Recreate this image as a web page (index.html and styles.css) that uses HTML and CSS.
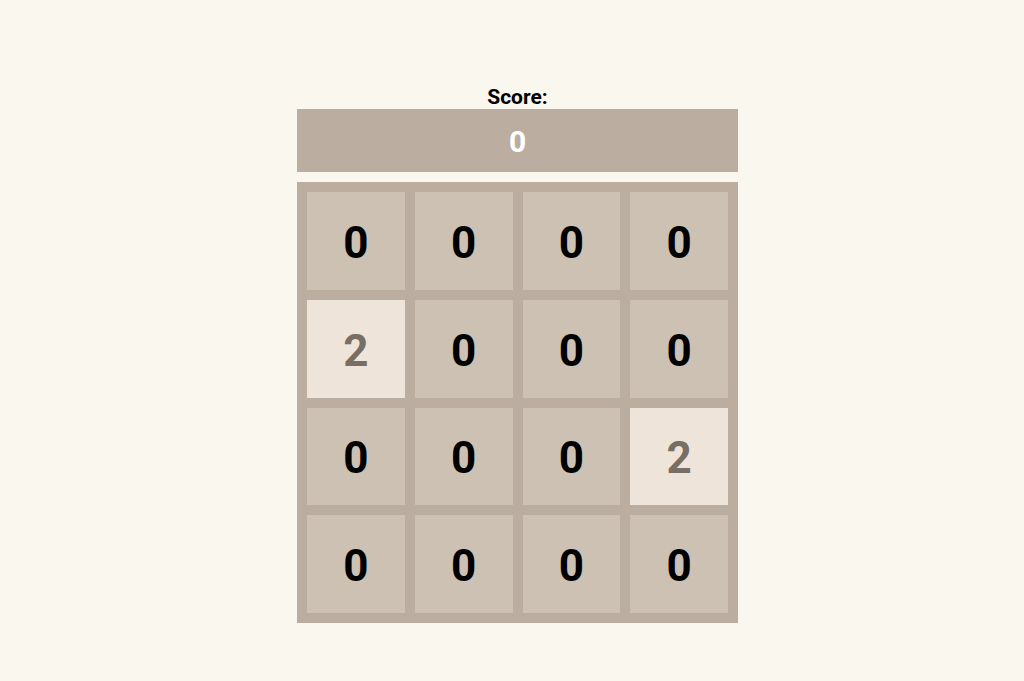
FILE: index.html
```html
<!DOCTYPE html>
<html>

<head>
    <title>2048</title>
    <link rel="stylesheet" href="styles.css">
</head>

<body>
    <div class="game">
        <div class="score-label">Score:</div>
        <div class="score" id="score">0</div>
        <div class="board" id="board">
            <div class="tile">0</div>
            <div class="tile">0</div>
            <div class="tile">0</div>
            <div class="tile">0</div>
            <div class="tile tile-2">2</div>
            <div class="tile">0</div>
            <div class="tile">0</div>
            <div class="tile">0</div>
            <div class="tile">0</div>
            <div class="tile">0</div>
            <div class="tile">0</div>
            <div class="tile tile-2">2</div>
            <div class="tile">0</div>
            <div class="tile">0</div>
            <div class="tile">0</div>
            <div class="tile">0</div>
        </div>
    </div>
</body>

</html>
```

FILE: styles.css
```css
body {
    font-family: Roboto, Arial, sans-serif;
    background: #faf7ef;
    margin: 0;
    padding: 0 0 0 11px;
}

.game {
    width: 441px;
    margin: 85px auto 0;
}

.score-label {
    text-align: center;
    font-size: 21px;
    font-weight: bold;
    line-height: 24px;
    color: #000;
}

.score {
    background: #bbada0;
    color: white;
    height: 63px;
    line-height: 65px;
    text-align: center;
    font-size: 30px;
    font-weight: bold;
    margin-bottom: 10px;
}

.board {
    background: #bbada0;
    padding: 10px;
    display: grid;
    grid-template-columns: repeat(4, 1fr);
    grid-auto-rows: 97.75px;
    gap: 10px;
}

.tile {
    background: #cdc1b4;
    display: flex;
    align-items: center;
    justify-content: center;
    padding-top: 4px;
    font-size: 44px;
    font-weight: bold;
    color: #000;
}

.tile-2 {
    background: #eee4da;
    color: #776e65;
}
```
